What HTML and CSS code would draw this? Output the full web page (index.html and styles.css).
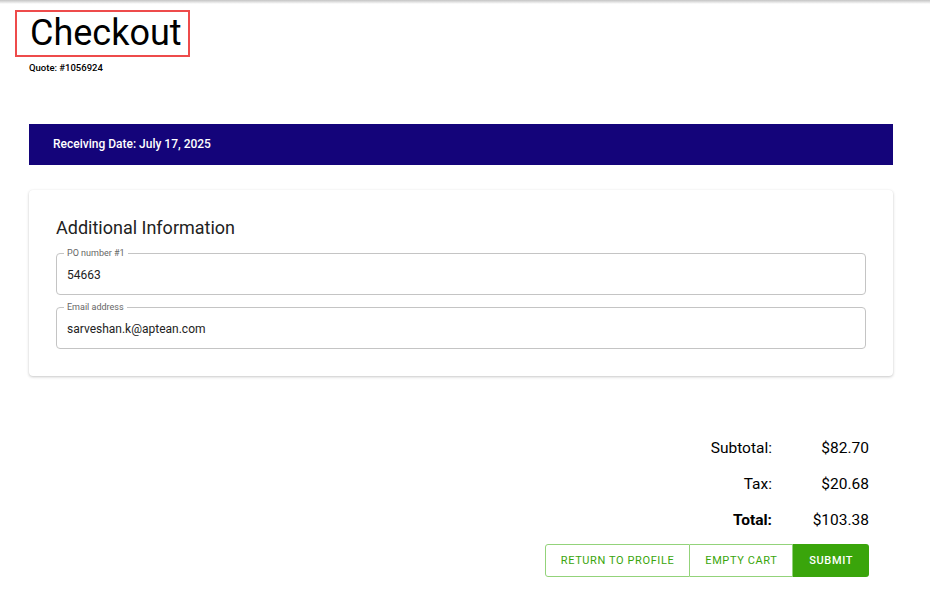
FILE: index.html
```html
<!DOCTYPE html>
<html>
<head>
  <title>Checkout</title>
  <link rel="stylesheet" href="styles.css">
</head>
<body>
  <div class="top-shadow"></div>

  <div class="page">
    <!-- Page heading -->
    <div class="heading">
      <h1 class="title">Checkout</h1>
      <div class="quote">Quote: #1056924</div>
    </div>

    <div class="date-bar">Receiving Date: July 17, 2025</div>

    <!-- Additional info card -->
    <div class="card">
      <h2>Additional Information</h2>
      <div class="field">
        <label>PO number #1</label>
        <input type="text" value="54663">
      </div>
      <div class="field">
        <label>Email address</label>
        <input type="text" value="sarveshan.k@aptean.com">
      </div>
    </div>

    <!-- Totals -->
    <div class="totals">
      <div class="total-row">
        <span class="label">Subtotal:</span>
        <span class="amount">$82.70</span>
      </div>
      <div class="total-row">
        <span class="label">Tax:</span>
        <span class="amount">$20.68</span>
      </div>
      <div class="total-row">
        <span class="label strong">Total:</span>
        <span class="amount">$103.38</span>
      </div>
    </div>

    <div class="actions">
      <button class="btn outline first">Return to profile</button>
      <button class="btn outline">Empty cart</button>
      <button class="btn solid">Submit</button>
    </div>
  </div>
</body>
</html>
```

FILE: styles.css
```css
body {
  margin: 0;
  font-family: 'Roboto', 'Liberation Sans', sans-serif;
  background-color: #fff;
  color: #000;
}

.top-shadow {
  height: 4px;
  background: linear-gradient(#c4c4c4, #fff);
}

.page {
  padding: 0 37px 0 29px;
}

/* Heading */
.heading {
  padding-top: 6px;
}

.title {
  display: inline-block;
  margin: 0 0 0 -14px;
  padding: 0 6px 0 13px;
  border: 2px solid #ee4b4b;
  font-size: 36px;
  font-weight: 400;
  line-height: 43px;
}

.quote {
  margin-top: 5px;
  font-size: 9.5px;
  font-weight: 500;
}

/* Date bar */
.date-bar {
  margin-top: 51px;
  height: 41px;
  line-height: 41px;
  padding-left: 24px;
  background-color: #14047a;
  color: #fff;
  font-size: 12px;
  font-weight: 500;
}

/* Card */
.card {
  margin-top: 25px;
  padding: 27px 27px 27px;
  border-radius: 4px;
  box-shadow: 0 1px 3px rgba(0, 0, 0, 0.22), 0 0 1px rgba(0, 0, 0, 0.06);
}

.card h2 {
  margin: 0 0 14px;
  font-size: 18px;
  font-weight: 400;
  line-height: 22px;
  color: #222;
}

.field {
  position: relative;
  display: flex;
  align-items: center;
  height: 42px;
  box-sizing: border-box;
  padding: 2px 10px 0;
  border: 1px solid #c4c4c4;
  border-radius: 4px;
}

.field + .field {
  margin-top: 12px;
}

.field label {
  position: absolute;
  top: -6px;
  left: 7px;
  padding: 0 3px;
  background-color: #fff;
  font-size: 9px;
  line-height: 11px;
  color: #666;
}

.field input {
  width: 100%;
  border: none;
  outline: none;
  padding: 0;
  font-family: inherit;
  font-size: 12px;
  color: #222;
  background: transparent;
}

/* Totals */
.totals {
  margin-top: 54px;
  display: flex;
  flex-direction: column;
  align-items: flex-end;
  padding-right: 24px;
}

.total-row {
  display: flex;
  height: 36px;
  align-items: center;
  font-size: 15.5px;
}

.total-row .label {
  width: 120px;
  text-align: right;
}

.total-row .label.strong {
  font-weight: 700;
}

.total-row .amount {
  width: 97px;
  text-align: right;
}

/* Buttons */
.actions {
  display: flex;
  justify-content: flex-end;
  margin-top: 6px;
  padding-right: 24px;
}

.btn {
  height: 33px;
  padding: 0 15px;
  font-family: inherit;
  font-size: 11px;
  font-weight: 400;
  letter-spacing: 0.6px;
  text-transform: uppercase;
  cursor: pointer;
  border-radius: 0;
}

.btn.outline {
  background-color: #fff;
  color: #3aa50b;
  border: 1px solid #93d37a;
}

.btn.outline + .btn.outline {
  border-left: none;
}

.btn.first {
  border-radius: 3px 0 0 3px;
}

.btn.solid {
  background-color: #3aa50b;
  color: #fff;
  border: none;
  border-radius: 0 3px 3px 0;
  padding: 0 16px;
  font-weight: 500;
}
```
